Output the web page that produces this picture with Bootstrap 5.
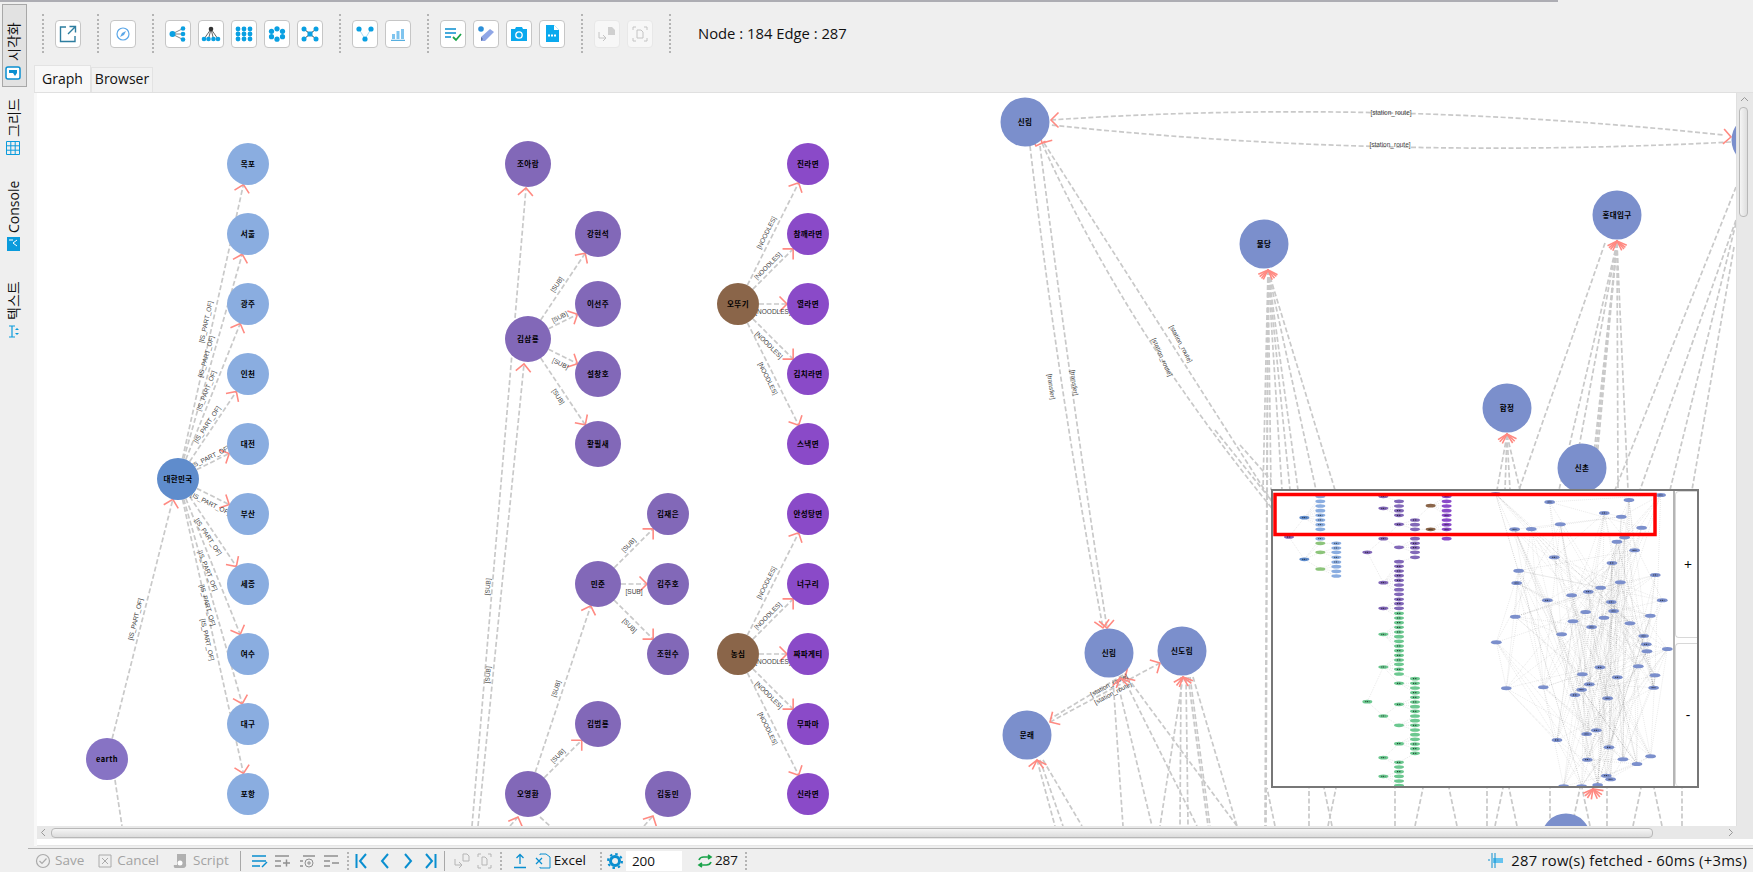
<!DOCTYPE html>
<html lang="ko">
<head>
  <meta charset="UTF-8" />
  <meta name="viewport" content="width=device-width, initial-scale=1" />
  <title>Graph</title>
  <link href="https://cdn.jsdelivr.net/npm/bootstrap@5.3.3/dist/css/bootstrap.min.css" rel="stylesheet" />
  <style>
    html, body { height: 100%; }
    body {
      background: #efefef;
      font-family: "Open Sans", "Noto Sans CJK KR", sans-serif;
      font-size: 14px;
      color: #111;
      overflow: hidden;
    }
    .top-line { height: 2px; width: 1558px; background: #adadb3; flex: none; }
    /* left rail */
    .rail { width: 34px; flex: none; padding: 2px 0 0 2px; }
    .rail-tab {
      writing-mode: vertical-rl;
      text-orientation: sideways;
      transform: rotate(180deg);
      width: 25px;
      display: flex;
      align-items: center;
      gap: 4px;
      font-size: 14px;
      line-height: 1;
      padding-left: 2px;
      white-space: nowrap;
    }
    .rail-tab.on { height: 83px; background: #e2e2e2; border: 1px solid #a8a8a8; padding-top: 5px; margin-bottom: 14px; }
    .rail-tab.t-grid { height: 61px; margin-bottom: 21px; padding-top: 7px; }
    .rail-tab.t-console { height: 73px; margin-bottom: 20px; padding-top: 5px; }
    .rail-tab.t-text { height: 64px; padding-top: 1px; }
    /* toolbar */
    .tools { height: 63px; flex: none; padding-left: 8px; }
    .grip { width: 2px; height: 39px; margin: 0 11px 0 0; border-left: 2px dotted #b4b4b4; flex: none; }
    .tool {
      width: 26px; height: 28px; padding: 0;
      background: #fff; border: 1px solid #c6c6c6; border-radius: 4px;
      display: flex; align-items: center; justify-content: center;
      margin-right: 7px; flex: none;
    }
    .tool.last { margin-right: 16px; }
    .tool.off { background: #f7f7f7; border-color: #e8e8e8; }
    .counts { font-size: 14.8px; margin-left: 16px; }
    /* tabs */
    .pane-tabs { height: 27px; border: 0; flex: none; align-items: flex-end; }
    .pane-tabs .nav-link {
      color: #111; font-size: 14px; line-height: 1; border-radius: 0; margin: 0;
      border: 1px solid #e3e3e3; border-bottom: 0; background: #f2f2f2;
      height: 25px; padding: 4px 3px 0 3px;
    }
    .pane-tabs .nav-link.active { height: 27px; padding: 6px 7px 0 7px; background: #f8f8f8; border-color: #e3e3e3; color: #111; }
    /* graph area */
    .frame { background: #f8f8f8; border-top: 1px solid #e0e0e0; padding-left: 3px; height: 754px; flex: none; }
    .canvas-row { height: 733px; background: #fff; overflow: hidden; }
    .graph-svg { display: block; width: 1699px; height: 733px; flex: none; }
    .vbar { width: 17px; flex: none; background: #e8e8e8; border-left: 1px solid #e0e0e0; }
    .vthumb { width: 9px; height: 110px; margin: 0 0 0 2px; background: linear-gradient(90deg,#f5f5f5,#dedede); border: 1px solid #b8b8b8; border-radius: 4px; }
    .hbar { height: 13px; background: #e8e8e8; }
    .hthumb { width: 1602px; height: 10px; margin-left: 2px; background: linear-gradient(#f5f5f5,#dcdcdc); border: 1px solid #b8b8b8; border-radius: 4px; }
    .frame-foot { height: 7px; background: #fff; border-bottom: 1px solid #e6e6e6; }
    /* minimap */
    .minimap {
      position: absolute; right: 54px; bottom: 58px; width: 428px; height: 299px;
      background: #fff; border: 2px solid #777;
    }
    .mini-side { width: 24px; flex: none; border-left: 2px solid #b5b5b5; }
    .mini-btn { font-size: 14px; line-height: 1; padding: 0 0 0 3px; background: #fff; border: 1px solid #d8d8d8; border-right: 0; border-radius: 4px 0 0 4px; color: #000; width: 100%; }
    .mini-btn.plus { height: 147px; margin-bottom: 5px; border-top-right-radius: 0; }
    .mini-btn.minus { height: 143px; border-bottom: 0; }
    /* status bar */
    .status { height: 24px; margin-left: 28px; border-top: 1px solid #b0b0b0; margin-top: 2px; padding-left: 7px; flex: none; }
    .st-text { font-size: 13.5px; line-height: 1; white-space: nowrap; }
    .st-off { color: #a3a3a3; }
    .st-sep { width: 1px; height: 20px; background: #a8a8a8; flex: none; }
    .st-grip { width: 2px; height: 18px; border-left: 2px dotted #b4b4b4; flex: none; }
    .st-input { width: 56px; height: 20px; background: #fff; border: 0; padding: 0 0 0 6px; line-height: 20px; }
    .st-right { font-size: 14.8px; letter-spacing: .25px; margin-left: auto; padding-right: 6px; white-space: nowrap; }
    svg { flex: none; }
    /* spacing of the status bar strip */
    .r2 { margin-right: 2px; } .r3 { margin-right: 3px; } .r4 { margin-right: 4px; }
    .r5 { margin-right: 5px; } .r6 { margin-right: 6px; } .r7 { margin-right: 7px; }
    .r8 { margin-right: 8px; } .r9 { margin-right: 9px; } .r10 { margin-right: 10px; }
    .r11 { margin-right: 11px; } .r12 { margin-right: 12px; } .r13 { margin-right: 13px; }
    .r14 { margin-right: 14px; } .r15 { margin-right: 15px; }
  </style>
</head>
<body class="d-flex flex-column">

  <div class="top-line"></div>

  <div class="d-flex">
    <!-- rail -->
    <div class="rail d-flex flex-column">
      <div class="rail-tab on">
        <svg width="14" height="16" viewBox="0 0 14 16" style="transform:rotate(90deg)"><rect x="1" y="1" width="12" height="14" rx="2" fill="#fff" stroke="#0a8fd0" stroke-width="1.5"/><path d="M7 4v8l-3-2 3-2z" fill="#0a8fd0"/><path d="M7 4h3v8H7z" fill="#0a8fd0"/></svg>
        <span>시각화</span>
      </div>
      <div class="rail-tab t-grid">
        <svg width="14" height="14" viewBox="0 0 14 14"><path d="M.5.5h13v13H.5zM.5 4.8h13M.5 9.2h13M4.8.5v13M9.2.5v13" fill="none" stroke="#0a9bdc"/></svg>
        <span>그리드</span>
      </div>
      <div class="rail-tab t-console">
        <svg width="13" height="14" viewBox="0 0 13 14"><rect width="13" height="14" fill="#0a9bdc"/><path d="M3 5l4 3-4 3M7 11h4" fill="none" stroke="#fff"/></svg>
        <span>Console</span>
      </div>
      <div class="rail-tab t-text">
        <svg width="14" height="15" viewBox="0 0 14 15"><path d="M5 2h6M8 2v11M5 13h6" fill="none" stroke="#0a9bdc" stroke-width="1.2"/><path d="M1 6l2-2 2 2zM1 9l2 2 2-2z" fill="#0a9bdc"/></svg>
        <span>텍스트</span>
      </div>
    </div>

    <!-- main -->
    <div class="flex-grow-1 d-flex flex-column">
      <div class="tools d-flex align-items-center">
        <div class="grip"></div>
        <button class="tool last"><svg width="18" height="18" viewBox="0 0 18 18"><path d="M7 2H1.5v14.500h14.500V11M9 9l7-7M10.500 1.500H16.500V7.500" fill="none" stroke="#2d7d9f" stroke-width="1.4"/></svg></button>
        <div class="grip"></div>
        <button class="tool last"><svg width="14" height="14" viewBox="0 0 14 14"><circle cx="7" cy="7" r="6" fill="none" stroke="#5ba7e8" stroke-width="1.2"/><path d="M10 4L8 8 4 10l2-4z" fill="#5ba7e8"/></svg></button>
        <div class="grip"></div>
        <button class="tool"><svg width="18" height="16" viewBox="0 0 18 16"><path d="M3 8l12-6M3 8h12M3 8l12 6" stroke="#666" stroke-width=".8"/><circle cx="3.500" cy="8" r="3" fill="#0aa0e2"/><circle cx="14" cy="2.500" r="2.300" fill="#0aa0e2"/><circle cx="14" cy="8" r="2.300" fill="#0aa0e2"/><circle cx="14" cy="13.500" r="2.300" fill="#0aa0e2"/></svg></button>
        <button class="tool"><svg width="20" height="16" viewBox="0 0 20 16"><path d="M10 3L3 13M10 3l-2.500 10M10 3l2.500 10M10 3l7 10" stroke="#555" stroke-width=".9"/><circle cx="10" cy="3" r="2.300" fill="#333"/><circle cx="3" cy="13" r="2.300" fill="#0aa0e2"/><circle cx="7.500" cy="13" r="2.300" fill="#0aa0e2"/><circle cx="12.500" cy="13" r="2.300" fill="#0aa0e2"/><circle cx="17" cy="13" r="2.300" fill="#0aa0e2"/></svg></button>
        <button class="tool"><svg width="18" height="16" viewBox="0 0 18 16"><g fill="#0aa0e2"><circle cx="3" cy="3" r="2.400"/><circle cx="9" cy="3" r="2.400"/><circle cx="15" cy="3" r="2.400"/><circle cx="3" cy="8" r="2.400"/><circle cx="9" cy="8" r="2.400"/><circle cx="15" cy="8" r="2.400"/><circle cx="3" cy="13" r="2.400"/><circle cx="9" cy="13" r="2.400"/><circle cx="15" cy="13" r="2.400"/></g></svg></button>
        <button class="tool"><svg width="18" height="16" viewBox="0 0 18 16"><g fill="#0aa0e2"><circle cx="9" cy="2.800" r="2.600"/><circle cx="14.500" cy="5.300" r="2.600"/><circle cx="14.500" cy="10.700" r="2.600"/><circle cx="9" cy="13.200" r="2.600"/><circle cx="3.500" cy="10.700" r="2.600"/><circle cx="3.500" cy="5.300" r="2.600"/></g></svg></button>
        <button class="tool last"><svg width="18" height="16" viewBox="0 0 18 16"><path d="M3 3l12 10M15 3L3 13" stroke="#444" stroke-width="1"/><g fill="#0aa0e2"><circle cx="3" cy="3" r="2.500"/><circle cx="15" cy="3" r="2.500"/><circle cx="3" cy="13" r="2.500"/><circle cx="15" cy="13" r="2.500"/><rect x="6.500" y="5.500" width="5" height="5"/></g></svg></button>
        <div class="grip"></div>
        <button class="tool"><svg width="18" height="16" viewBox="0 0 18 16"><path d="M9 13L3 3M9 13l6-10" stroke="#a8dcf5" stroke-width="1"/><g fill="#0aa0e2"><circle cx="3" cy="3" r="2.600"/><circle cx="15" cy="3" r="2.600"/><circle cx="9" cy="13" r="2.600"/></g></svg></button>
        <button class="tool last"><svg width="16" height="14" viewBox="0 0 16 14"><path d="M2 7h3v5H2zM6.500 4h3v8h-3zM11 2h3v10h-3z" fill="#7fc4ee"/><path d="M1 13.300h14" stroke="#2d9bd8"/></svg></button>
        <div class="grip"></div>
        <button class="tool"><svg width="18" height="16" viewBox="0 0 18 16"><path d="M1 3h11M1 7h11M1 11h6" stroke="#0a8fd0" stroke-width="1.300"/><path d="M9 11l3 3 5-6" fill="none" stroke="#1aa34a" stroke-width="1.800"/></svg></button>
        <button class="tool"><svg width="18" height="18" viewBox="0 0 18 18"><circle cx="4" cy="4" r="2.800" fill="#2b8fd8"/><path d="M13 4l4 3-9 9H4v-4z" fill="#8fa6e6"/><path d="M4 16v-4l2 2z" fill="#5f6f9f"/></svg></button>
        <button class="tool"><svg width="18" height="15" viewBox="0 0 18 15"><path d="M1 3h4l1-2h6l1 2h4v12H1z" fill="#0aa9ee"/><circle cx="9" cy="9" r="3.200" fill="none" stroke="#fff" stroke-width="1.300"/></svg></button>
        <button class="tool last"><svg width="13" height="17" viewBox="0 0 13 17"><path d="M0 0h8l5 5v12H0z" fill="#0aa9ee"/><path d="M8 0v5h5z" fill="#fff"/><path d="M2 10.500h9" stroke="#fff" stroke-width="2.200" stroke-dasharray="2 1"/></svg></button>
        <div class="grip"></div>
        <button class="tool off"><svg width="18" height="16" viewBox="0 0 18 16"><path d="M1 6v6h7M5 9l3 3-3 3" fill="none" stroke="#c4c4c4"/><path d="M10 1h4l3 3v5h-7z" fill="#d0d0d0"/></svg></button>
        <button class="tool off last"><svg width="16" height="16" viewBox="0 0 16 16"><path d="M1 4V1h3M12 1h3v3M15 12v3h-3M4 15H1v-3" fill="none" stroke="#c4c4c4"/><path d="M5 4h4l2 2v6H5z" fill="none" stroke="#c4c4c4"/></svg></button>
        <div class="grip"></div>
        <span class="counts">Node : 184 Edge : 287</span>
      </div>

      <ul class="nav pane-tabs">
        <li class="nav-item"><a class="nav-link active" href="#">Graph</a></li>
        <li class="nav-item"><a class="nav-link" href="#">Browser</a></li>
      </ul>

      <div class="frame position-relative">
        <div class="canvas-row d-flex">
          <svg class="graph-svg" id="graph" viewBox="37 93 1699 733"></svg>
          <div class="vbar d-flex flex-column">
            <svg width="15" height="14" viewBox="0 0 15 14"><path d="M4 8l3.500-3.500L11 8" fill="none" stroke="#999"/></svg>
            <div class="vthumb"></div>
          </div>
        </div>
        <div class="hbar d-flex align-items-center">
          <svg width="12" height="13" viewBox="0 0 12 13"><path d="M8 3L4.500 6.500 8 10" fill="none" stroke="#999"/></svg>
          <div class="hthumb"></div>
          <svg class="ms-auto" width="28" height="13" viewBox="0 0 28 13"><path d="M4 3l3.500 3.500L4 10" fill="none" stroke="#999"/></svg>
        </div>
        <div class="frame-foot"></div>

        <div class="minimap d-flex">
          <svg class="flex-grow-1" id="mini" width="400" height="295" viewBox="1273 491 400 295"></svg>
          <div class="mini-side d-flex flex-column">
            <button class="mini-btn plus">+</button>
            <button class="mini-btn minus">-</button>
          </div>
        </div>
      </div>
    </div>
  </div>

  <!-- status bar -->
  <div class="status d-flex align-items-center">
    <svg width="16" height="16" viewBox="0 0 16 16" class="r4"><circle cx="8" cy="8" r="6.500" fill="none" stroke="#aaa" stroke-width="1.200"/><path d="M4.500 8l2.500 2.500 4.500-5" fill="none" stroke="#aaa" stroke-width="1.200"/></svg>
    <span class="st-text st-off r14">Save</span>
    <svg width="14" height="14" viewBox="0 0 14 14" class="r5"><path d="M1 1h12v12H1zM4 4l6 6M10 4l-6 6" fill="none" stroke="#aaa"/></svg>
    <span class="st-text st-off r14">Cancel</span>
    <svg width="14" height="16" viewBox="0 0 14 16" class="r6"><path d="M4 1h9v10a3 3 0 0 1-3 4H3a2 2 0 0 1-2-3h3z" fill="#b0b0b0"/><circle cx="7" cy="10" r="2.500" fill="#fff"/></svg>
    <span class="st-text st-off r11">Script</span>
    <div class="st-sep r10"></div>
    <svg width="18" height="14" viewBox="0 0 18 14" class="r5"><path d="M1 2h14M1 7h14M1 12h8" stroke="#0a8fd0" stroke-width="1.500"/><path d="M11 13l5-5" stroke="#0a8fd0" stroke-width="1.500"/></svg>
    <svg width="18" height="14" viewBox="0 0 18 14" class="r7"><path d="M1 2h14M1 7h6M1 12h6" stroke="#909090" stroke-width="1.500"/><path d="M9 9h7M12.500 5.500v7" stroke="#909090" stroke-width="1.500"/></svg>
    <svg width="18" height="14" viewBox="0 0 18 14" class="r6"><path d="M4 2h12M1 7h3M1 12h3" stroke="#909090" stroke-width="1.500"/><circle cx="10" cy="9" r="4" fill="none" stroke="#909090"/><path d="M8 9h4M10 7v4" stroke="#909090"/></svg>
    <svg width="18" height="14" viewBox="0 0 18 14" class="r6"><path d="M1 2h14M1 7h6M1 12h6M9 9h7" stroke="#909090" stroke-width="1.500"/></svg>
    <div class="st-grip r6"></div>
    <svg width="12" height="16" viewBox="0 0 12 16" class="r13"><path d="M1.500 1v14M11 1L5 8l6 7" fill="none" stroke="#0a8fd0" stroke-width="2"/></svg>
    <svg width="9" height="16" viewBox="0 0 9 16" class="r15"><path d="M8 1L2 8l6 7" fill="none" stroke="#0a8fd0" stroke-width="2"/></svg>
    <svg width="9" height="16" viewBox="0 0 9 16" class="r12"><path d="M1 1l6 7-6 7" fill="none" stroke="#0a8fd0" stroke-width="2"/></svg>
    <svg width="12" height="16" viewBox="0 0 12 16" class="r7"><path d="M1 1l6 7-6 7M10.500 1v14" fill="none" stroke="#0a8fd0" stroke-width="2"/></svg>
    <div class="st-sep r9"></div>
    <svg width="16" height="16" viewBox="0 0 16 16" class="r7"><path d="M1 6v6h7M5 9l3 3-3 3" fill="none" stroke="#b5b5b5"/><path d="M9 1h4l2 2v5H9z" fill="none" stroke="#b5b5b5"/></svg>
    <svg width="15" height="16" viewBox="0 0 15 16" class="r8"><path d="M1 4V1h3M11 1h3v3M14 12v3h-3M4 15H1v-3" fill="none" stroke="#b5b5b5"/><path d="M5 4h3l2 2v6H5z" fill="none" stroke="#b5b5b5"/></svg>
    <div class="st-grip r11"></div>
    <svg width="14" height="16" viewBox="0 0 14 16" class="r8"><path d="M7 11V2M3.500 5L7 1.500 10.500 5M1 14.500h12" fill="none" stroke="#0a8fd0" stroke-width="1.300"/></svg>
    <svg width="16" height="16" viewBox="0 0 16 16" class="r3"><path d="M5 2V1h6l4 3v11H5v-1" fill="none" stroke="#0a8fd0"/><path d="M1 5l6 6M7 5l-6 6" stroke="#0a8fd0" stroke-width="1.300"/></svg>
    <span class="st-text r14">Excel</span>
    <div class="st-grip r5"></div>
    <svg width="16" height="16" viewBox="0 0 16 16" class="r3"><circle cx="8" cy="8" r="4.500" fill="none" stroke="#0a8fd0" stroke-width="3"/><circle cx="8" cy="8" r="7" fill="none" stroke="#0a8fd0" stroke-width="2" stroke-dasharray="2.500 3"/></svg>
    <span class="st-input st-text r15">200</span>
    <svg width="16" height="14" viewBox="0 0 16 14" class="r2"><path d="M2 6a5 4 0 0 1 5-3h6M11 1l3 2-3 2M14 8a5 4 0 0 1-5 3H3M5 9l-3 2 3 2" fill="none" stroke="#1aa34a" stroke-width="1.600"/></svg>
    <span class="st-text r7">287</span>
    <div class="st-grip"></div>
    <span class="st-right d-flex align-items-center"><svg width="16" height="15" viewBox="0 0 16 15" class="r7"><path d="M5 1h10v5H5z" transform="translate(0 4)" fill="#66c3ef"/><path d="M4 0v15M7 0v15M2 7H0" stroke="#0a8fd0"/></svg>287 row(s) fetched - 60ms (+3ms)</span>
  </div>

<script>
const NS = "http://www.w3.org/2000/svg";
const LIGHT = "#8aade0", KOREA = "#5f8ccc", PURPLE = "#8268b8", VIOLET = "#8a4ac8", BROWN = "#8a6549", BLUE = "#7b8fcc", GREEN = "#6cc890", LIME = "#8cc47a";

function el(parent, tag, attrs, text) {
  const e = document.createElementNS(NS, tag);
  for (const k in attrs) e.setAttribute(k, attrs[k]);
  if (text) e.textContent = text;
  parent.appendChild(e);
  return e;
}

const graph = document.getElementById("graph");
const edgeLayer = el(graph, "g", {});
const nodeLayer = el(graph, "g", {});

const nodes = {};
function addNode(key, label, x, y, r, fill) { nodes[key] = { label, x, y, r, fill }; }

// left tree
addNode("kr", "대한민국", 178, 479, 21, KOREA);
addNode("earth", "earth", 107, 759, 21, "#8773c4");
[["목포",164],["서울",234],["광주",304],["인천",374],["대전",444],["부산",514],["세종",584],["여수",654],["대구",724],["포항",794]]
  .forEach(c => addNode(c[0], c[0], 248, c[1], 21, LIGHT));
// people
addNode("조아람", "조아람", 528, 164, 23, PURPLE);
addNode("김삼룡", "김삼룡", 528, 339, 23, PURPLE);
[["강현석",234],["이선주",304],["설창호",374],["황필새",444]].forEach(c => addNode(c[0], c[0], 598, c[1], 23, PURPLE));
addNode("민준", "민준", 598, 584, 23, PURPLE);
addNode("김범룡", "김범룡", 598, 724, 23, PURPLE);
addNode("오영환", "오영환", 528, 794, 23, PURPLE);
addNode("김동민", "김동민", 668, 794, 23, PURPLE);
[["김재은",514],["김주호",584],["조현수",654]].forEach(c => addNode(c[0], c[0], 668, c[1], 21, PURPLE));
// noodles
addNode("오뚜기", "오뚜기", 738, 304, 21, BROWN);
addNode("농심", "농심", 738, 654, 21, BROWN);
[["진라면",164],["참깨라면",234],["열라면",304],["김치라면",374],["스낵면",444],["안성탕면",514],["너구리",584],["짜파게티",654],["무파마",724],["신라면",794]]
  .forEach(c => addNode(c[0], c[0], 808, c[1], 21, VIOLET));
// stations
[["신림",1025,122],["불당",1264,244],["홍대입구",1617,215],["합정",1507,408],["신촌",1582,468],["신림2",1109,653],["신도림",1182,651],["문래",1027,735],["역",1566,838],["끝",1756,140]]
  .forEach(c => addNode(c[0], c[0] === "신림2" ? "신림" : (c[0] === "역" || c[0] === "끝") ? "" : c[0], c[1], c[2], 24.5, BLUE));

function arrow(x, y, angle) {
  const wing = 10.6, spread = Math.PI / 4;
  const a = angle + Math.PI - spread, b = angle + Math.PI + spread;
  const d = `M${x + wing * Math.cos(a)} ${y + wing * Math.sin(a)}L${x} ${y}L${x + wing * Math.cos(b)} ${y + wing * Math.sin(b)}`;
  el(nodeLayer, "path", { d, fill: "none", stroke: "#ff8a82", "stroke-width": 1.6 });
}

function dashed(d) {
  el(edgeLayer, "path", { d, fill: "none", stroke: "#c9c9c9", "stroke-width": 1.7, "stroke-dasharray": "5 2.500" });
}

function edgeLabel(text, x, y, deg) {
  el(nodeLayer, "text", {
    x, y, "text-anchor": "middle", "font-size": 6.5, fill: "#444",
    "font-family": "Liberation Sans, sans-serif",
    transform: `rotate(${deg} ${x} ${y})`
  }, text);
}

// straight edge between two nodes, arrow on the target, label rotated along the line
function link(fromKey, toKey, label) {
  const a = nodes[fromKey], b = nodes[toKey];
  const ang = Math.atan2(b.y - a.y, b.x - a.x);
  const x1 = a.x + a.r * Math.cos(ang), y1 = a.y + a.r * Math.sin(ang);
  const x2 = b.x - b.r * Math.cos(ang), y2 = b.y - b.r * Math.sin(ang);
  dashed(`M${x1} ${y1}L${x2} ${y2}`);
  arrow(x2, y2, ang);
  if (label) {
    let deg = ang * 180 / Math.PI;
    if (deg > 90) deg -= 180;
    if (deg < -90) deg += 180;
    const mx = (x1 + x2) / 2, my = (y1 + y2) / 2;
    const rad = deg * Math.PI / 180;
    // upward edges carry the label above the line, the others below it
    const off = deg < 0 ? 5 : -8;
    edgeLabel(label, mx + off * Math.sin(rad), my - off * Math.cos(rad) + 2, deg);
  }
}

["목포","서울","광주","인천","대전","부산","세종","여수","대구","포항"].forEach(k => link("kr", k, "[IS_PART_OF]"));
link("earth", "kr", "[IS_PART_OF]");
dashed("M115 780L122 826");
["강현석","이선주","설창호","황필새"].forEach(k => link("김삼룡", k, "[SUB]"));
["김재은","김주호","조현수"].forEach(k => link("민준", k, "[SUB]"));
link("오영환", "민준", "[SUB]");
link("오영환", "김범룡", "[SUB]");
["진라면","참깨라면","열라면","김치라면","스낵면"].forEach(k => link("오뚜기", k, "[NOODLES]"));
["안성탕면","너구리","짜파게티","무파마","신라면"].forEach(k => link("농심", k, "[NOODLES]"));

// long edges that come in from below the visible area
dashed("M472 826L526 188"); arrow(526, 188, -1.49);
dashed("M478 826L524 364"); arrow(524, 364, -1.47);
edgeLabel("[SUB]", 490, 587, -85);
edgeLabel("[SUB]", 490, 675, -85);
dashed("M510 826L518 817"); arrow(518, 817, -1.2);
dashed("M540 817L550 826");
dashed("M644 826L653 816"); arrow(653, 816, -1.1);

// station edges
dashed("M1051 120Q1374 98 1724 135"); arrow(1051, 120, Math.PI); arrow(1731, 137, 0.08);
dashed("M1731 142Q1380 160 1051 125"); 
edgeLabel("[station_route]", 1391, 115, 0);
edgeLabel("[station_route]", 1390, 147, 0);
dashed("M1030 146Q1060 400 1103 628"); arrow(1103, 628, 1.4);
dashed("M1040 146Q1072 400 1107 628"); arrow(1107, 628, 1.5);
edgeLabel("[transfer]", 1049, 387, 82);
edgeLabel("[transfer]", 1072, 383, 82);
dashed("M1042 143Q1130 340 1290 530"); arrow(1036, 146, 1.9);
dashed("M1044 143L1290 530"); arrow(1042, 143, 2.1);
edgeLabel("[station_route]", 1160, 358, 66);
edgeLabel("[station_route]", 1179, 345, 62);

// bundle under 불당
[[1265,826],[1266,826],[1263,490],[1271,490],[1282,490],[1290,490],[1298,490],[1316,490],[1335,490]].forEach(p => dashed(`M1268 270L${p[0]} ${p[1]}`));
[-1.9,-1.7,-1.45,-1.2].forEach(a => arrow(1268, 270, a));
// bundle under 홍대입구
[[1559,490],[1571,490],[1590,490],[1592,490],[1594,490],[1618,490],[1628,490]].forEach(p => dashed(`M1617 243L${p[0]} ${p[1]}`));
[-1.95,-1.7,-1.5,-1.25].forEach(a => arrow(1617, 241, a));
dashed("M1736 187L1615 490"); dashed("M1736 223L1670 490"); dashed("M1736 220L1640 490"); dashed("M1734 247L1692 490");
// 합정
[[1497,490],[1505,490],[1510,490],[1520,490]].forEach(p => dashed(`M1507 435L${p[0]} ${p[1]}`));
dashed("M1605 243L1519 490");
[-1.9,-1.6,-1.35].forEach(a => arrow(1507, 434, a));
// 문래, 신림, 신도림
dashed("M1050 722L1160 663"); arrow(1160, 663, -0.5);
dashed("M1123 675L1050 719"); arrow(1050, 722, 2.6);
arrow(1125, 678, 2.6);
edgeLabel("[station_route]", 1110, 687, -28);
edgeLabel("[station_route]", 1114, 695, -28);
[[1113,680,1123,826],[1117,680,1152,826],[1123,677,1197,826],[1127,677,1237,826],
 [1183,677,1160,826],[1181,677,1180,826],[1186,677,1188,826],[1188,677,1208,826],[1190,677,1210,826],[1193,677,1237,826],
 [1037,760,1055,826],[1040,760,1063,826],[1043,760,1082,826]].forEach(l => dashed(`M${l[0]} ${l[1]}L${l[2]} ${l[3]}`));
[-2,-1.7,-1.3].forEach(a => arrow(1183, 677, a));
[-2,-1.6].forEach(a => arrow(1120, 678, a));
[-1.9,-1.45].forEach(a => arrow(1037, 760, a));
// stubs below the minimap
[1275,1309,1328,1332,1395,1415,1457,1487,1495,1517,1550,1572,1590,1607,1633,1662,1682].forEach((x, i) => dashed(`M${x} 826L${x + (i % 3 - 1) * 8} 788`));
[-2.2,-1.8,-1.5,-1.2].forEach(a => arrow(1593, 789, a));
// left and right of the minimap
dashed("M1215 430L1271 500"); dashed("M1240 445L1271 480");

for (const k in nodes) {
  const n = nodes[k];
  el(nodeLayer, "circle", { cx: n.x, cy: n.y, r: n.r, fill: n.fill });
  if (n.label) {
    el(nodeLayer, "text", {
      x: n.x, y: n.y + 2.5, "text-anchor": "middle", "font-size": 7.5, "font-weight": 700, fill: "#000", "letter-spacing": ".4",
      "font-family": "Noto Sans CJK KR, sans-serif"
    }, n.label);
  }
}

// minimap, coordinates measured on the 3x crop
const mini = document.getElementById("mini");
const miniEdges = el(mini, "g", { transform: "translate(1260 480) scale(.3333)" });
const miniNodes = el(mini, "g", { transform: "translate(1260 480) scale(.3333)" });
let seed = 7;
function rnd() { seed = (seed * 1103515245 + 12345) & 0x7fffffff; return seed / 0x7fffffff; }

function col(x, ys, fill) { return ys.map(y => [x, y, fill]); }
const miniList = [].concat(
  col(181, [49,64,78,92,106,120,134,148,176], LIGHT),
  col(229, [190,204,217,232,246,260,274,288], LIGHT),
  col(181, [190,217,267], LIME),
  col(133, [113,238], KOREA),
  col(87, [171], PURPLE),
  col(370, [49,85,176,308,385], PURPLE), col(322, [217], PURPLE),
  col(417, [64,78,92,106,133,202,245,259,273,287,301,315,329,343,358,371,385], PURPLE),
  col(465, [120,134,148,176,190,203,217,232], PURPLE),
  col(512, [77,148], BROWN),
  col(560, [49,64,78,92,106,120,134,148,176], VIOLET),
  col(370, [463,561,708,833,889], GREEN), col(322, [665], GREEN),
  col(417, [400,414,428,442,456,470,484,498,512,526,540,553,568,582,610,673,736,791,847,861,875,889,903,917], GREEN),
  col(465, [596,610,624,638,652,666,680,694,708,722,736,750,764,778,792,806,820], GREEN)
);
const blues = [[707,42],[869,66],[1107,60],[1033,99],[1084,110],[1202,45],[901,133],[764,148],[814,147],[1145,143],[1094,172],[1071,185],[1124,211],[883,232],[1056,249],[776,272],[1186,285],[770,309],[1081,307],[1022,323],[985,335],[935,346],[862,361],[1054,366],[1207,361],[1061,393],[977,396],[1032,413],[1171,407],[766,410],[939,424],[1110,430],[995,441],[905,463],[1151,468],[709,487],[1159,493],[1222,507],[1161,514],[1135,559],[1020,562],[1072,592],[967,583],[1185,586],[988,613],[850,622],[739,625],[1181,623],[965,629],[945,645],[1043,655],[1009,751],[980,762],[891,780],[1047,802],[1089,838],[982,839],[1172,829],[1131,852],[1039,887],[1052,898],[911,919],[965,919],[1013,915]];

function miniLine(a, b) {
  el(miniEdges, "line", { x1: a[0], y1: a[1], x2: b[0], y2: b[1], stroke: "#000", "stroke-opacity": .26, "stroke-width": 1.1, "stroke-dasharray": "3 3" });
}
// blue stations: many crossing edges, mostly running up and down
blues.forEach(a => {
  for (let i = 0; i < 3; i++) {
    const b = blues[Math.floor(rnd() * blues.length)];
    if (b !== a) miniLine(a, b);
  }
});
blues.slice(-20).forEach(a => {
  for (let i = 0; i < 4; i++) miniLine(a, blues[Math.floor(rnd() * blues.length)]);
});
// trees: every node links to the nearest node one column to the left
miniList.forEach(a => {
  let best = null, dist = 1e9;
  miniList.forEach(b => {
    const dx = a[0] - b[0];
    if (dx > 30 && dx < 60) {
      const d = Math.abs(a[1] - b[1]);
      if (d < dist) { dist = d; best = b; }
    }
  });
  if (best && dist < 120) miniLine(a, best);
});

function miniNode(x, y, fill, w, h) {
  el(miniNodes, "ellipse", { cx: x, cy: y, rx: w, ry: h, fill });
  if (rnd() > .45) {
    el(miniNodes, "line", { x1: x - 6, y1: y, x2: x + 6, y2: y, stroke: "#000", "stroke-width": 2.4, "stroke-dasharray": "3 2.500" });
  }
}
miniList.forEach(n => miniNode(n[0], n[1], n[2], 15, 5.5));
blues.forEach(n => miniNode(n[0], n[1], BLUE, 16, 6));

// viewport rectangle
el(mini, "rect", { x: 1275, y: 494.500, width: 380, height: 40, fill: "none", stroke: "#f00", "stroke-width": 3.500 });
</script>

<script src="https://cdn.jsdelivr.net/npm/bootstrap@5.3.3/dist/js/bootstrap.bundle.min.js"></script>
</body>
</html>
